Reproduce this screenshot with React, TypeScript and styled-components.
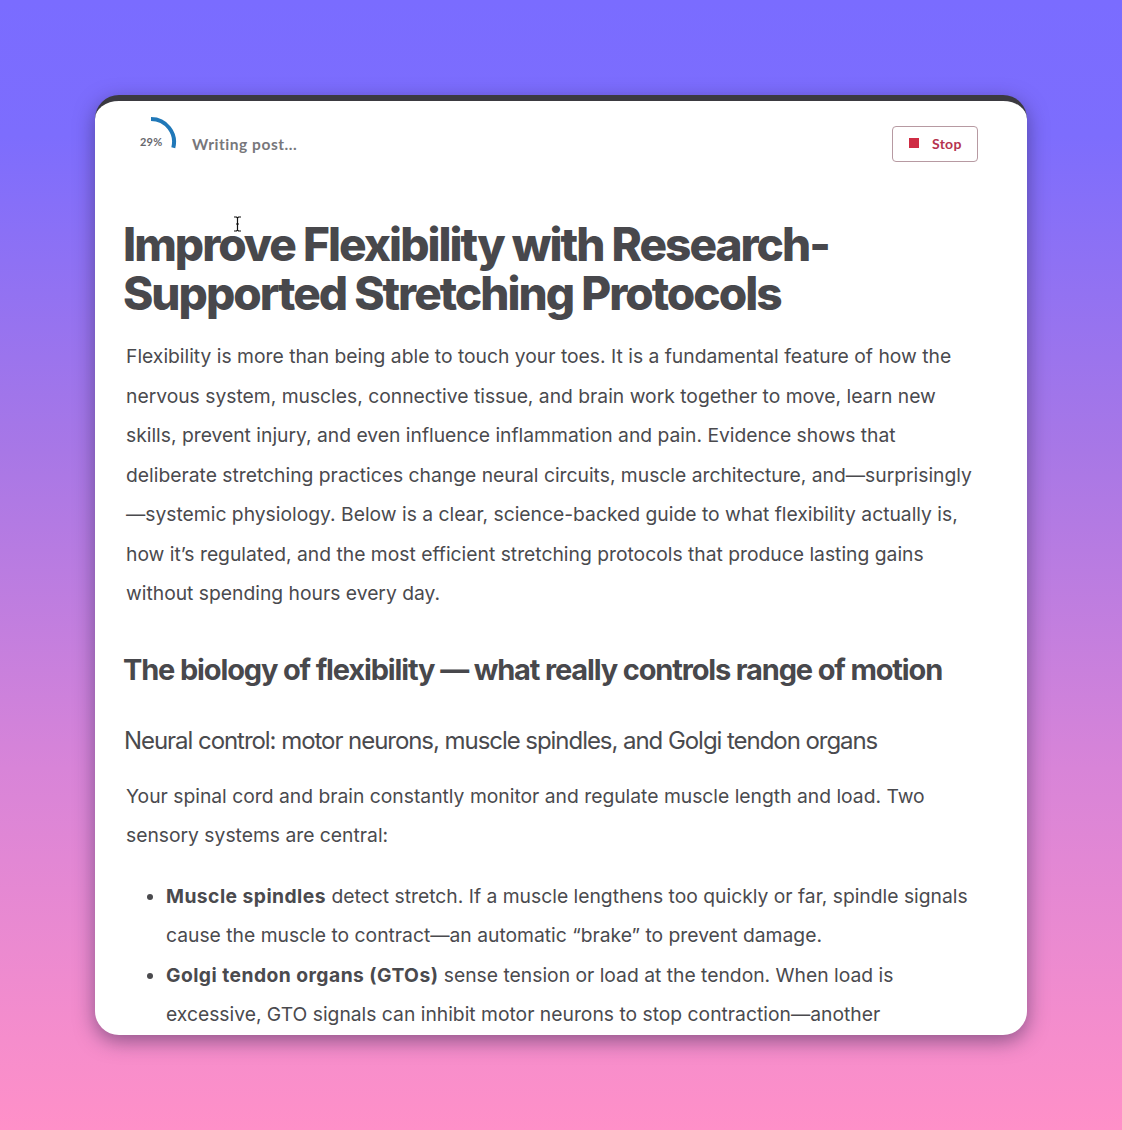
import styled, { createGlobalStyle } from 'styled-components'

const GlobalStyle = createGlobalStyle`
  html, body {
    margin: 0;
    padding: 0;
  }
  body {
    font-family: Inter, "Liberation Sans", sans-serif;
  }
`

const Page = styled.div`
  position: relative;
  box-sizing: border-box;
  width: 1122px;
  height: 1130px;
  padding: 95px 95px 95px;
  background: linear-gradient(180deg, #7a6cff 0%, #7d6dfd 12%, #a877e6 40%, #d884d8 68%, #ff90c8 100%);
  overflow: hidden;
`

const Card = styled.main`
  box-sizing: border-box;
  width: 932px;
  height: 940px;
  background: #fff;
  border-top: 6px solid #3b3a40;
  border-radius: 24px;
  box-shadow: 0 6px 20px rgba(40, 30, 70, 0.5);
  overflow: hidden;
`

const StatusBar = styled.header`
  display: flex;
  align-items: flex-start;
  justify-content: space-between;
  padding: 16px 49px 0 28px;
  height: 119px;
  box-sizing: border-box;
`

const Progress = styled.div`
  display: flex;
  align-items: flex-start;
`

const Ring = styled.div`
  position: relative;
  width: 56px;
  height: 56px;
`

const RingLabel = styled.span`
  position: absolute;
  left: 17px;
  top: 18px;
  font-family: Lato, sans-serif;
  font-size: 11px;
  font-weight: 700;
  letter-spacing: 0.2px;
  color: #66666c;
`

const StatusText = styled.span`
  margin: 18px 0 0 13px;
  font-family: Lato, sans-serif;
  font-size: 15.5px;
  font-weight: 700;
  letter-spacing: 0.55px;
  color: #77777b;
`

const StopButton = styled.button`
  display: flex;
  align-items: center;
  gap: 13px;
  box-sizing: border-box;
  width: 86px;
  height: 36px;
  margin-top: 9px;
  padding: 0 0 2px 16px;
  background: #fff;
  border: 1px solid #b79aa2;
  border-radius: 4px;
  font-family: Lato, sans-serif;
  font-size: 14px;
  font-weight: 700;
  letter-spacing: 0.3px;
  color: #b5334f;
`

const StopMark = styled.span`
  width: 10px;
  height: 10px;
  background: #cf2c44;
`

const Cursor = styled.svg`
  position: absolute;
  left: 233px;
  top: 216px;
`

const Article = styled.article`
  padding: 0 49px 0 28px;
  color: #4a4a4e;
`

const Title = styled.h1`
  margin: 0 0 19px;
  font-size: 46px;
  line-height: 49px;
  font-weight: 800;
  letter-spacing: -2px;
  color: #48484c;
`

const Paragraph = styled.p`
  margin: 0 0 0 3px;
  font-size: 19.3px;
  line-height: 39.5px;
`

const SectionTitle = styled.h2`
  margin: 36px 0 0;
  font-size: 29px;
  line-height: 40px;
  font-weight: 700;
  letter-spacing: -1.15px;
  color: #48484c;
`

const SubTitle = styled.h3`
  margin: 36px 0 21px 1px;
  font-size: 24px;
  line-height: 30px;
  font-weight: 400;
  letter-spacing: -1.05px;
  color: #4a4a4e;
`

const Bullets = styled.ul`
  margin: 21px 0 0 3px;
  padding: 0 0 0 40px;
  font-size: 19.3px;
  line-height: 39.5px;
`

const Strong = styled.strong`
  font-weight: 700;
  letter-spacing: 0.45px;
`

export default function App() {
  return (
    <Page>
      <GlobalStyle />
      <Card>
        <StatusBar>
          <Progress>
            <Ring>
              <svg width="56" height="56" viewBox="0 0 56 56">
                <path d="M28 2 A 23 23 0 0 1 50.3 30.7" fill="none" stroke="#2078b8" strokeWidth="4" />
              </svg>
              <RingLabel>29%</RingLabel>
            </Ring>
            <StatusText>Writing post...</StatusText>
          </Progress>
          <StopButton>
            <StopMark />
            Stop
          </StopButton>
        </StatusBar>
        <Article>
          <Title>Improve Flexibility with Research-Supported Stretching Protocols</Title>
          <Paragraph>
            Flexibility is more than being able to touch your toes. It is a fundamental feature of how the nervous
            system, muscles, connective tissue, and brain work together to move, learn new skills, prevent injury, and
            even influence inflammation and pain. Evidence shows that deliberate stretching practices change neural
            circuits, muscle architecture, and—surprisingly—systemic physiology. Below is a clear, science-backed guide
            to what flexibility actually is, how it’s regulated, and the most efficient stretching protocols that
            produce lasting gains without spending hours every day.
          </Paragraph>
          <SectionTitle>The biology of flexibility — what really controls range of motion</SectionTitle>
          <SubTitle>Neural control: motor neurons, muscle spindles, and Golgi tendon organs</SubTitle>
          <Paragraph>
            Your spinal cord and brain constantly monitor and regulate muscle length and load. Two sensory systems are
            central:
          </Paragraph>
          <Bullets>
            <li>
              <Strong>Muscle spindles</Strong> detect stretch. If a muscle lengthens too quickly or far, spindle signals
              cause the muscle to contract—an automatic “brake” to prevent damage.
            </li>
            <li>
              <Strong>Golgi tendon organs (GTOs)</Strong> sense tension or load at the tendon. When load is excessive,
              GTO signals can inhibit motor neurons to stop contraction—another
            </li>
          </Bullets>
        </Article>
      </Card>
      <Cursor width="9" height="16" viewBox="0 0 9 16">
        <path d="M1 1h2.5L4.5 2l1-1H8M4.5 2v12M1 15h2.5l1-1 1 1H8M3 8h3" fill="none" stroke="#111" strokeWidth="1.2" />
      </Cursor>
    </Page>
  )
}
